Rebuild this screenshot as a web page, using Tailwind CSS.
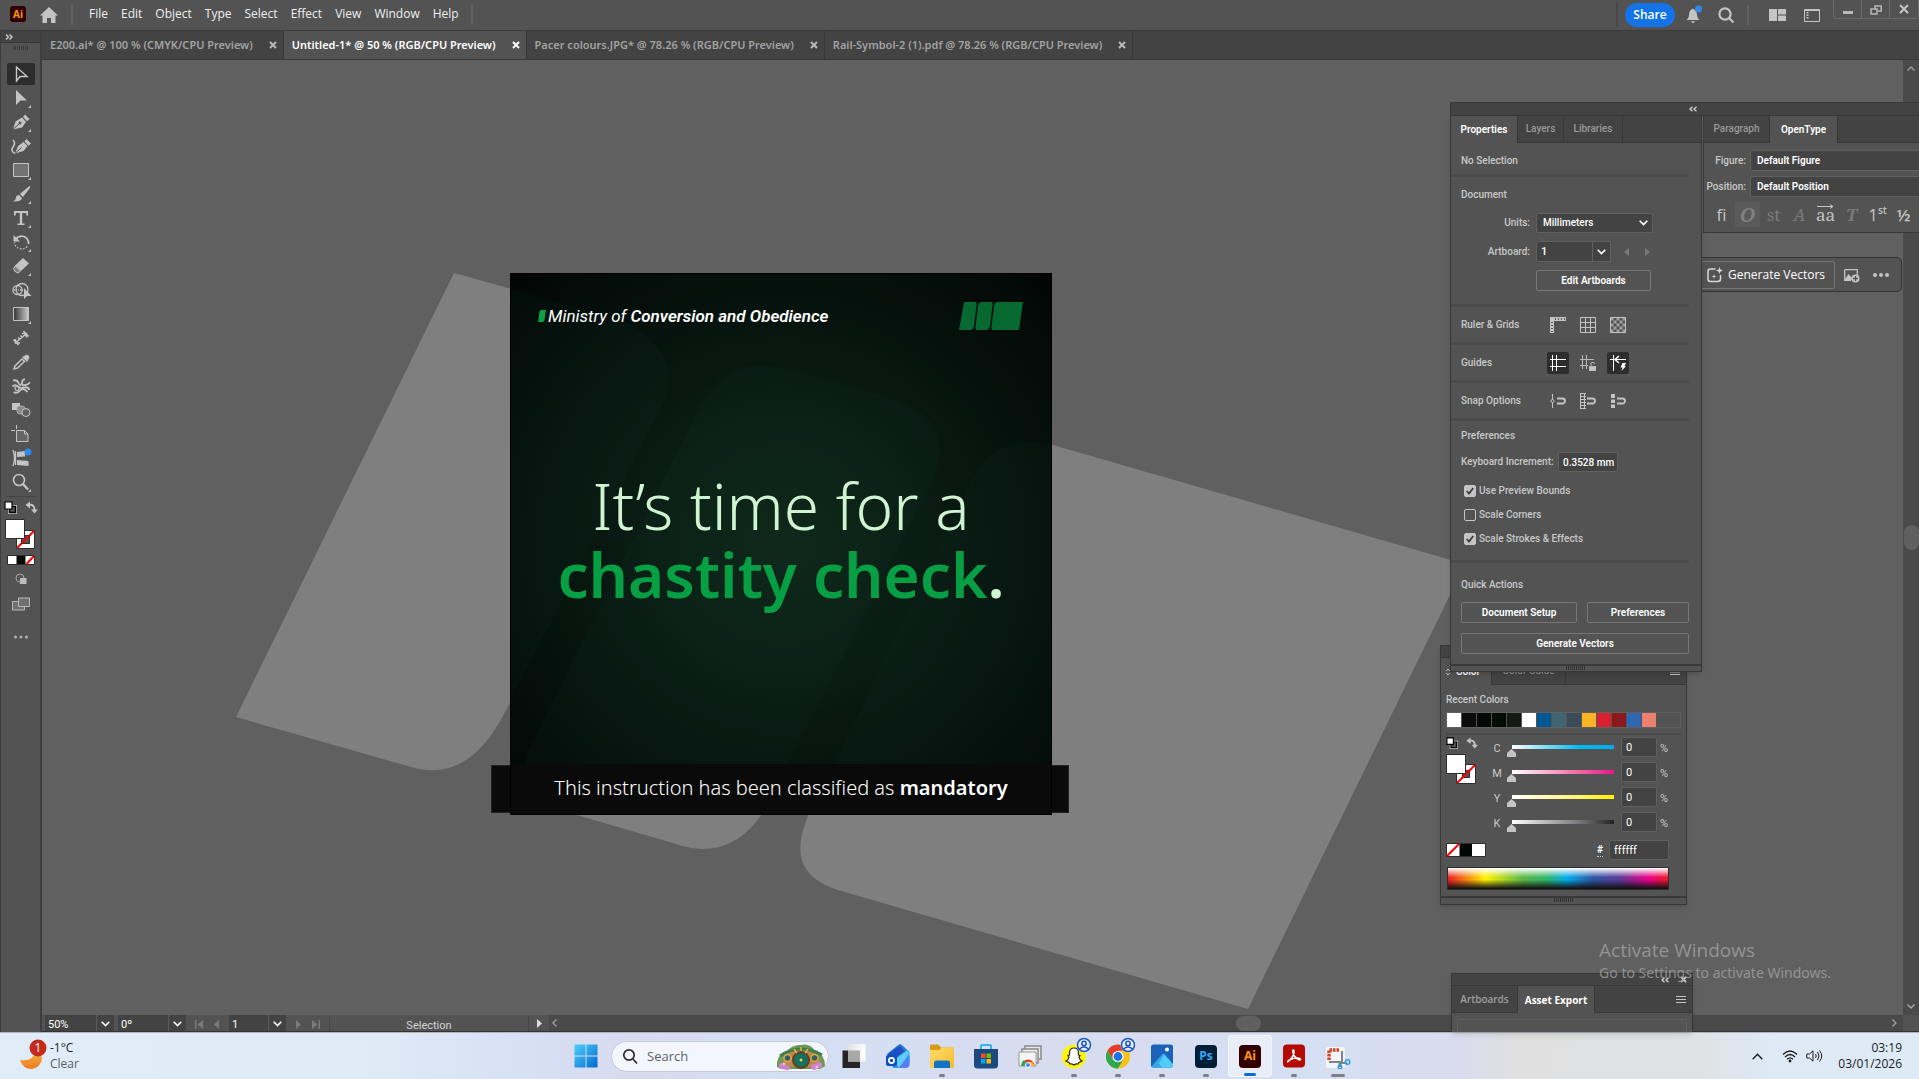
<!DOCTYPE html>
<html lang="en">
<head>
  <meta charset="UTF-8">
  <title>Untitled-1* @ 50 % (RGB/CPU Preview)</title>
  <script src="https://cdn.jsdelivr.net/npm/@tailwindcss/browser@4"></script>
</head>
<body class="h-screen flex flex-col overflow-hidden bg-[#535353] text-[#c8c8c8] font-['Open_Sans',sans-serif] text-[12px] leading-4">

  <!-- Menu bar -->
  <header class="h-[31px] shrink-0 flex items-center border-b border-[#3a3a3a] pl-[10px] relative">
    <div class="size-4 rounded-[3px] bg-[#330000] text-[#ff9a00] text-[10px] font-bold flex items-center justify-center mb-[2px]">Ai</div>
    <button class="ml-[13px]" aria-label="Home">
      <svg class="w-5 h-5" viewBox="0 0 20 20" fill="#c4c4c4"><path d="M10 2 19 10.500H16.500V18H12V13H8V18H3.500V10.500H1Z"/></svg>
    </button>
    <div class="w-[2px] h-5 bg-[#606060] ml-3"></div>
    <nav class="flex gap-[13px] ml-4 text-[#f0f0f0] mb-[3px]">
      <button>File</button><button>Edit</button><button>Object</button><button>Type</button><button>Select</button><button>Effect</button><button>View</button><button>Window</button><button>Help</button>
    </nav>
    <div class="w-[2px] h-5 bg-[#606060] ml-3"></div>
    <div class="ml-auto flex items-center h-full">
      <div class="w-[2px] h-6 bg-[#484848]"></div>
      <button class="ml-[7px] w-[50px] h-6 rounded-full bg-[#1473e6] text-white text-[12px] font-semibold">Share</button>
      <button class="ml-2 relative" aria-label="Notifications">
        <svg class="w-[20px] h-[20px]" viewBox="0 0 20 20"><path fill="#c4c4c4" d="M8.500 4.500A1.500 1.500 0 0 1 11 4.500Q14 6 14 10 14 13 16.500 15H3.500Q6 13 6 10 6 6 8.500 4.500ZM8 16.200H12Q11.500 18 10 18T8 16.200Z"/><circle cx="15.500" cy="4" r="3.500" fill="#2d8ceb"/></svg>
      </button>
      <button class="ml-[14px]" aria-label="Search">
        <svg class="w-[18px] h-[18px]" viewBox="0 0 18 18" fill="none" stroke="#c4c4c4" stroke-width="2.200"><circle cx="8" cy="8" r="5.600"/><path d="m12 12 4.500 4.500"/></svg>
      </button>
      <div class="w-[2px] h-5 bg-[#606060] ml-3"></div>
      <button class="ml-5" aria-label="Arrange documents">
        <svg class="w-[17px] h-[12px]" viewBox="0 0 17 12" fill="#c4c4c4"><path d="M0 0H8V12H0ZM9 0H17V5.500H9ZM9 6.500H17V12H9Z"/></svg>
      </button>
      <button class="ml-[18px]" aria-label="Workspace">
        <svg class="w-[16px] h-[13px]" viewBox="0 0 16 13" fill="none" stroke="#c4c4c4"><path d="M.5.500H15.500V12.500H.5ZM.5 1.500H15.500"/><path d="M3.500 3V10" stroke-width="2" stroke-dasharray="1.500 1"/></svg>
      </button>
      <div class="self-start ml-[13px] h-[19px] flex border border-t-0 border-[#6a6a6a] rounded-b-[4px] divide-x divide-[#6a6a6a]">
        <button class="w-7 flex justify-center" aria-label="Minimize"><svg class="w-3 h-4" viewBox="0 0 12 16"><path d="M1 11H11V14H1Z" fill="#b8b8b8"/></svg></button>
        <button class="w-7 flex justify-center" aria-label="Restore"><svg class="w-3 h-4" viewBox="0 0 12 16" fill="none" stroke="#b8b8b8" stroke-width="1.500"><path d="M5 9V6H11.200V11H8"/><path d="M1 9H7V14H1Z"/></svg></button>
        <button class="w-7 flex justify-center" aria-label="Close"><svg class="w-3 h-4" viewBox="0 0 12 16" stroke="#c4c4c4" stroke-width="2"><path d="m2 5 8 8M10 5l-8 8"/></svg></button>
      </div>
    </div>
  </header>

  <div class="flex-1 min-h-0 flex relative">

    <!-- Tool bar -->
    <aside class="w-[42px] shrink-0 border-x border-r-2 border-[#3e3e3e] flex flex-col items-center relative">
      <div class="w-full h-[12px] bg-[#434343] border-b border-[#383838] flex items-center pl-1">
        <svg class="w-2 h-2" viewBox="0 0 8 8" fill="none" stroke="#d0d0d0" stroke-width="1.300"><path d="M1 1.500 3.500 4 1 6.500M4.500 1.500 7 4 4.500 6.500"/></svg>
      </div>
      <div class="w-4 h-1 mt-[3px] mb-[13px] bg-[repeating-linear-gradient(90deg,#3a3a3a_0_1px,transparent_1px_2px)]"></div>
      <div class="flex flex-col gap-[2px] [&>button]:w-7 [&>button]:h-[22px] [&>button]:flex [&>button]:items-center [&>button]:justify-center [&_svg]:w-6 [&_svg]:h-[22px]">
        <button class="bg-[#2d2d2d] rounded-[2px]" aria-label="Selection"><svg viewBox="0 0 24 22" fill="none" stroke="#c8c8c8" stroke-width="1.400"><path d="M7.500 4V18L11 13.500H18Z"/></svg></button>
        <button aria-label="Direct selection"><svg viewBox="0 0 24 22" fill="#c4c4c4"><path d="M7 3V18L11.500 13.500H18ZM22 18V21H19Z"/></svg></button>
        <button aria-label="Pen"><svg viewBox="0 0 24 22" fill="#c4c4c4"><path d="M4 18.500 6.500 10.500 13 6.500 17 11 13 16.500ZM14 6 16 3.500 20.500 8 18 10.200ZM22 18V21H19Z"/><path d="m4 18.500 6.500-6" stroke="#535353" /><circle cx="11" cy="12" r="1.400" fill="#535353"/></svg></button>
        <button aria-label="Curvature"><svg viewBox="0 0 24 22" fill="#c4c4c4"><path d="M6 18.500 9 11 14.500 7 18.500 11 14.500 16ZM15.500 6.500 17.500 4 22 8.500 19.500 10.700Z"/><path d="m6 18.500 6.500-6" stroke="#535353"/><path d="M4 5Q7 8 4 12T6 18.500" fill="none" stroke="#c4c4c4" stroke-width="1.600"/></svg></button>
        <button aria-label="Rectangle"><svg viewBox="0 0 24 22"><path d="M4.500 4.500H19.500V17.500H4.500Z" fill="#737373" stroke="#c4c4c4"/><path d="M22 18V21H19Z" fill="#c4c4c4"/></svg></button>
        <button aria-label="Paintbrush"><svg viewBox="0 0 24 22" fill="#c4c4c4"><path d="M20.500 3Q22 3.500 20.500 5.500L14 14 10.800 11ZM10 12 13 15Q12 19 4 18.500 7 17 7 14.500T10 12ZM22 18V21H19Z"/></svg></button>
        <button aria-label="Type"><svg viewBox="0 0 24 22" fill="#c4c4c4"><path d="M5 4H19V8.500H17.500L17 6H13.200V16.500H15.500V18H8.500V16.500H10.800V6H7L6.500 8.500H5ZM22 18V21H19Z"/></svg></button>
        <button aria-label="Rotate"><svg viewBox="0 0 24 22" fill="none" stroke="#c4c4c4"><path d="M6.500 8.500Q10 4 15 5.500 20 8 19.500 13" stroke-width="1.800"/><path d="M4.500 4V10.500H11Z" fill="#c4c4c4" stroke="none"/><path d="M18 15.500Q15 19 10.500 17.500 6 16 5.500 11.500" stroke-width="1.400" stroke-dasharray="1.500 1.600"/><path d="M22 18V21H19Z" fill="#c4c4c4" stroke="none"/></svg></button>
        <button aria-label="Eraser"><svg viewBox="0 0 24 22" fill="#c4c4c4"><path d="m14 3 6 5.500-8 7.500-6-5.500Z"/><path d="m6 11 5.500 5-2.500 2Q5 17 4.500 13.500Z" fill="#808080" stroke="#c4c4c4"/><path d="M22 18V21H19Z"/></svg></button>
        <button aria-label="Shape builder"><svg viewBox="0 0 24 22" fill="none" stroke="#c4c4c4" stroke-width="1.300"><circle cx="8.500" cy="11" r="4.500"/><circle cx="13" cy="10.500" r="6"/><path d="M5 11H14" stroke-dasharray="1 1"/><path d="M15 9V20L18 17H22.500Z" fill="#c4c4c4" stroke="none"/></svg></button>
        <button aria-label="Gradient"><svg viewBox="0 0 24 22"><defs><linearGradient id="toolGrad"><stop stop-color="#333"/><stop offset="1" stop-color="#ccc"/></linearGradient></defs><path d="M4.500 4.500H19.500V17.500H4.500Z" fill="url(#toolGrad)" stroke="#c4c4c4"/><path d="M22 18V21H19Z" fill="#c4c4c4"/></svg></button>
        <button aria-label="Dimension"><svg viewBox="0 0 24 22" fill="none" stroke="#c4c4c4" stroke-width="1.500"><path d="M7.500 15 17 7M4.500 12.500 9.500 18M14.500 4 19.500 9.500M6.500 12V16H11M13 6.500H17.500V10.500M9 10.500 11 12.500M11.500 8.500 13.500 10.500"/></svg></button>
        <button aria-label="Eyedropper"><svg viewBox="0 0 24 22" fill="none" stroke="#c4c4c4" stroke-width="1.500"><path d="m5 18 1-3 7-7 2.500 2.500-7 6.500Z"/><path d="m13 6 5 5 2.500-4.500Q20 3.500 17.500 3.800Z" fill="#c4c4c4" stroke="none"/></svg></button>
        <button aria-label="Puppet warp"><svg viewBox="0 0 24 22" fill="none" stroke="#c4c4c4" stroke-width="1.800"><path d="M4 5.500Q8 4.500 9.500 8T13 8.500Q13 4 16 4.500M13 10Q18 11 21 7.500M3.500 11.500Q6 9 9 11.500T15 12.500Q19 11.500 20.500 15M4.500 17Q8 19 11 15.500T18.500 17"/><circle cx="8" cy="13.500" r="2" stroke-width="1.200"/></svg></button>
        <button aria-label="Blend"><svg viewBox="0 0 24 22"><path d="M3 4H11V11H3Z" fill="#c4c4c4"/><rect x="8" y="7" width="8" height="8" rx="3" fill="#8a8a8a" stroke="#ababab"/><circle cx="17" cy="13.500" r="4" fill="#606060" stroke="#c4c4c4"/></svg></button>
        <button aria-label="Artboard"><svg viewBox="0 0 24 22" fill="none" stroke="#c4c4c4"><path d="M2 7.500H6M7.500 2V6"/><path d="M7.500 7.500H15.500L19 11V18.500H7.500Z" fill="#666"/><path d="M15.500 7.500V11H19"/></svg></button>
        <button aria-label="Intertwine"><svg viewBox="0 0 24 22" fill="#c4c4c4"><path d="m8 5 8-1V9.500L8 10ZM8 13 19.500 14V19L8 18Z"/><path d="M4 3Q7 11 4 19M6.500 4V18" fill="none" stroke="#c4c4c4" stroke-width="1.300"/><circle cx="19" cy="5" r="3.500" fill="#2d8ceb"/></svg></button>
        <button aria-label="Zoom"><svg viewBox="0 0 24 22" fill="none" stroke="#c4c4c4" stroke-width="1.600"><circle cx="10" cy="9" r="5.500"/><path d="m14 13 5 5.500" stroke-width="2.400"/><path d="M22 18V21H19Z" fill="#c4c4c4" stroke="none"/></svg></button>
      </div>
      <div class="w-[30px] h-px bg-[#444] mt-[3px]"></div>
      <div class="flex gap-2 mt-1">
        <svg class="size-[13px]" viewBox="0 0 13 13" fill="none"><path d="M5 5H12V12H5Z" stroke="#d0d0d0" stroke-width="2"/><path d="M5.500 5.500H11.500V11.500H5.500Z" stroke="#000" stroke-width="1.500"/><path d="M1 1H8V8H1Z" fill="#fff" stroke="#000" stroke-width="1.200"/></svg>
        <svg class="size-[13px]" viewBox="0 0 13 13"><path d="M4 4Q9.500 3 9.500 9" fill="none" stroke="#c4c4c4" stroke-width="2"/><path d="M5 .5V7.500L.5 4ZM6 8.500H13L9.500 12.500Z" fill="#c4c4c4"/></svg>
      </div>
      <svg class="w-[31px] h-[32px] mt-[5px]" viewBox="0 0 31 32"><path d="M11.500 11.500H29.500V29.500H11.500Z" fill="#fff" stroke="#2d2d2d"/><path d="m12 29 17-17" stroke="#f00" stroke-width="2"/><path d="M16.500 16.500H24.500V24.500H16.500Z" fill="#535353" stroke="#2d2d2d"/><path d="M17 24 24 17" stroke="#f00" stroke-width="2"/><path d="M.5.500H19.500V19.500H.5Z" fill="#fff" stroke="#2d2d2d"/></svg>
      <svg class="w-[28px] h-[10px] mt-1" viewBox="0 0 28 10"><path d="M.5.500H27.500V9.500H.5Z" fill="#fff" stroke="#2d2d2d"/><path d="M9.500 1H18.500V9H9.500Z" fill="#030b07"/><path d="m19.500 9 7.500-8" stroke="#f00" stroke-width="2"/></svg>
      <svg class="size-[12px] mt-2" viewBox="0 0 12 12"><circle cx="5" cy="5" r="4" fill="none" stroke="#a8a8a8"/><path d="M5 5H11.500V11H5Z" fill="#bcbcbc"/></svg>
      <svg class="w-5 h-[14px] mt-[12px]" viewBox="0 0 20 14" fill="#707070" stroke="#b8b8b8"><path d="M1.500 4.500H13.500V13H1.500Z"/><path d="M7.500 1H18.500V9.500H7.500Z"/></svg>
      <svg class="w-4 h-1 mt-[24px]" viewBox="0 0 16 4" fill="#b0b0b0"><circle cx="2.500" cy="2" r="1.500"/><circle cx="8" cy="2" r="1.500"/><circle cx="13.500" cy="2" r="1.500"/></svg>
    </aside>

    <main class="flex-1 min-w-0 flex flex-col">
      <!-- Document tabs -->
      <div class="h-[29px] shrink-0 bg-[#434343] border-b border-[#383838] flex text-[11px] font-semibold text-[#a2a2a2] font-['Noto_Sans',sans-serif] [&>div]:flex [&>div]:items-center [&>div]:border-r [&>div]:border-[#383838] [&>div]:pl-2 [&>div]:pr-[6px] [&>div]:gap-4 [&>div]:whitespace-nowrap [&_svg]:size-2">
        <div><span>E200.ai* @ 100 % (CMYK/CPU Preview)</span><button aria-label="Close tab"><svg viewBox="0 0 8 8" stroke="#b8b8b8" stroke-width="2"><path d="m1 1 6 6M7 1 1 7"/></svg></button></div>
        <div class="bg-[#535353] text-white"><span>Untitled-1* @ 50 % (RGB/CPU Preview)</span><button aria-label="Close tab"><svg viewBox="0 0 8 8" stroke="#fff" stroke-width="2"><path d="m1 1 6 6M7 1 1 7"/></svg></button></div>
        <div><span>Pacer colours.JPG* @ 78.26 % (RGB/CPU Preview)</span><button aria-label="Close tab"><svg viewBox="0 0 8 8" stroke="#b8b8b8" stroke-width="2"><path d="m1 1 6 6M7 1 1 7"/></svg></button></div>
        <div><span>Rail-Symbol-2 (1).pdf @ 78.26 % (RGB/CPU Preview)</span><button aria-label="Close tab"><svg viewBox="0 0 8 8" stroke="#b8b8b8" stroke-width="2"><path d="m1 1 6 6M7 1 1 7"/></svg></button></div>
      </div>

      <div class="flex-1 min-h-0 flex">
        <!-- Canvas -->
        <div class="flex-1 min-w-0 relative overflow-hidden bg-[#606060]">
          <svg class="absolute inset-0 w-full h-full" fill="#7f7f7f">
            <g transform="translate(-42 -60)">
              <path id="band1" d="M454 273 605 315C655 328 684 365 660 410L510 702C487 752 456 780 411 767L236 717Z"/>
              <path id="band2" d="M701 405C719 370 750 359 785 368L893 399C938 412 951 445 931 482L775 790C757 832 726 858 683 846L570 813C528 801 515 775 531 743Z"/>
              <path id="band3" d="M966 492C981 456 1008 433 1053 445L1465 564 1248 1009 838 890C803 878 791 858 808 816Z"/>
            </g>
          </svg>

          <div class="absolute left-[449px] top-[705px] w-[578px] h-12 bg-[#0a0a0a] border border-[#222]"></div>
          <div class="absolute left-[468px] top-[213px] w-[542px] h-[542px] border border-black overflow-hidden flex flex-col font-['Noto_Sans',sans-serif] bg-[radial-gradient(circle_at_50%_50%,#0e261a_0%,#0a1d14_35%,#06120d_65%,#020604_100%)]">
            <svg class="absolute inset-0 w-full h-full" fill="#1f6b46" fill-opacity=".05">
              <g transform="translate(-511 -274)">
                <path d="M454 273 605 315C655 328 684 365 660 410L510 702C487 752 456 780 411 767L236 717Z"/>
                <path d="M701 405C719 370 750 359 785 368L893 399C938 412 951 445 931 482L775 790C757 832 726 858 683 846L570 813C528 801 515 775 531 743Z"/>
                <path d="M966 492C981 456 1008 433 1053 445L1465 564 1248 1009 838 890C803 878 791 858 808 816Z"/>
              </g>
            </svg>
            <div class="relative flex items-center justify-between pl-[27px] pr-7 pt-7 font-['Roboto',sans-serif]">
              <p class="flex items-center gap-[2px] text-[17px] leading-5 italic text-white">
                <svg class="w-2 h-3" viewBox="0 0 8 12" fill="#08a045"><path d="M3 0H8L6.500 10Q6.200 12 4.500 12H0L1.500 2Q1.800 0 3 0Z"/></svg>
                <span>Ministry of <b class="font-semibold">Conversion and Obedience</b></span>
              </p>
              <svg class="w-16 h-7" viewBox="0 0 64 28" fill="#06692f"><path d="M5 0H16Q18 0 17.600 3L15 24Q14 28 11 28H0ZM23 0H32Q34 0 33.600 3L31 24Q30 28 27 28H18Q16.200 28 16.500 25L19 4Q19.500 0 23 0ZM39 0H64L60 28H34Q32 28 32.400 25L35 4Q35.500 0 39 0Z"/></svg>
            </div>
            <h1 class="relative mt-[142px] text-center text-[64px] leading-[68px] font-light text-[#d0f3d2]">It’s time for a<br><span class="text-[62px] font-semibold text-[#069f44]">chastity check</span><span class="text-[62px] font-semibold">.</span></h1>
            <div class="relative mt-auto h-[50px] bg-[#0a0a0a] text-center text-[20px] leading-[48px] font-light text-white">This instruction has been classified as <b class="font-semibold">mandatory</b></div>
          </div>

          <div class="absolute right-px top-[197px] w-[212px] h-[35px] rounded-r-[5px] border border-[#333] bg-[#535353] flex items-center pl-[10px] text-white">
            <button class="w-[134px] h-7 border border-[#747474] rounded-[2px] flex items-center gap-[5px] pl-[5px] whitespace-nowrap">
              <svg class="size-4 shrink-0" viewBox="0 0 16 16" fill="none" stroke="#d8d8d8" stroke-width="1.500"><path d="M8.500 2H3.500Q1 2 1 4.500V12Q1 14.500 3.500 14.500H10.500Q13.500 14.500 13.500 12V8"/><path d="m12.500 0 .9 2.600L16 3.500l-2.600.9-.9 2.600-.9-2.600L9 3.500l2.600-.9ZM7 7l.6 1.900 1.900.6-1.900.6L7 12l-.6-1.900-1.900-.6 1.900-.6Z" fill="#d8d8d8" stroke="none"/></svg>
              Generate Vectors
            </button>
            <button class="ml-[9px]" aria-label="Add image"><svg class="size-4" viewBox="0 0 16 16"><path d="M.7 2.700H13.300V8M7 13.300H.7V2.700" fill="none" stroke="#c4c4c4" stroke-width="1.300"/><path d="m1 12 3.500-5 4 4.500L7 13H1Z" fill="#c4c4c4"/><circle cx="11.500" cy="11.500" r="4" fill="#c4c4c4"/><path d="M11.500 9V14M9 11.500H14" stroke="#535353" stroke-width="1.300"/></svg></button>
            <button class="ml-[13px]" aria-label="More"><svg class="w-4 h-1" viewBox="0 0 16 4" fill="#c4c4c4"><circle cx="2" cy="2" r="2"/><circle cx="8" cy="2" r="2"/><circle cx="14" cy="2" r="2"/></svg></button>
          </div>
        </div>
        <!-- Vertical scroll bar -->
        <div class="w-4 shrink-0 bg-[#4a4a4a] flex flex-col items-center py-[5px]">
          <svg class="w-2 h-[7px]" viewBox="0 0 8 7" fill="none" stroke="#989898" stroke-width="1.500"><path d="M.5 5.500 4 2 7.500 5.500"/></svg>
          <div class="w-[15px] h-[25px] rounded-full bg-[#606060] mt-auto mb-auto"></div>
          <svg class="w-2 h-[7px]" viewBox="0 0 8 7" fill="none" stroke="#a8a8a8" stroke-width="1.500"><path d="M.5 1.500 4 5 7.500 1.500"/></svg>
        </div>
      </div>

      <!-- Status bar -->
      <div class="h-[17px] shrink-0 bg-[#4a4a4a] border-b border-[#333] flex items-stretch text-[11px] text-white font-['Roboto',sans-serif] relative">
        <div class="w-[486px] bg-[#535353] pl-[3px] flex [&_input]:bg-[#434343] [&_input]:pl-[3px] [&_input]:pt-[3px] [&_input]:min-w-0 [&_input]:h-4 [&_button]:flex [&_button]:items-center [&_button]:justify-center [&_button]:pt-[2px]">
          <input class="w-[51px]" aria-label="Zoom level" value="50%">
          <button class="w-[18px] bg-[#434343] border-l border-[#5a5a5a]" aria-label="Zoom levels"><svg class="w-[9px] h-[6px]" viewBox="0 0 9 6" fill="none" stroke="#fff" stroke-width="1.600"><path d="m.7.8 3.800 3.800L8.300.8"/></svg></button>
          <input class="w-[50px] ml-1" aria-label="Rotation" value="0º">
          <button class="w-[18px] bg-[#434343] border-l border-[#5a5a5a]" aria-label="Rotations"><svg class="w-[9px] h-[6px]" viewBox="0 0 9 6" fill="none" stroke="#fff" stroke-width="1.600"><path d="m.7.8 3.800 3.800L8.300.8"/></svg></button>
          <button class="w-[26px]" aria-label="First artboard"><svg class="w-2 h-[9px]" viewBox="0 0 8 9" fill="#7a7a7a"><path d="M0 0H1.500V9H0ZM8 0V9L2.500 4.500Z"/></svg></button>
          <button class="w-[17px]" aria-label="Previous artboard"><svg class="w-[5px] h-[9px] mr-2" viewBox="0 0 5 9" fill="#7a7a7a"><path d="M5 0V9L0 4.500Z"/></svg></button>
          <input class="w-[39px]" aria-label="Artboard number" value="1">
          <button class="w-[18px] bg-[#434343] border-l border-[#5a5a5a]" aria-label="Artboards"><svg class="w-[9px] h-[6px]" viewBox="0 0 9 6" fill="none" stroke="#fff" stroke-width="1.600"><path d="m.7.8 3.800 3.800L8.300.8"/></svg></button>
          <button class="w-[25px]" aria-label="Next artboard"><svg class="w-[5px] h-[9px]" viewBox="0 0 5 9" fill="#7a7a7a"><path d="M0 0V9L5 4.500Z"/></svg></button>
          <button class="w-[18px]" aria-label="Last artboard"><svg class="w-2 h-[9px] mr-2" viewBox="0 0 8 9" fill="#7a7a7a"><path d="M6.500 0H8V9H6.500ZM0 0V9L5.500 4.500Z"/></svg></button>
          <span class="flex-1 border-l border-[#474747] text-center leading-[21px] text-[#d4d4d4]">Selection</span>
        </div>
        <button class="w-[21px] bg-[#535353] border-l border-[#474747] flex items-center justify-center" aria-label="Status menu"><svg class="w-[5px] h-[9px]" viewBox="0 0 5 9" fill="#ddd"><path d="M0 0V9L5 4.500Z"/></svg></button>
        <div class="flex-1 flex items-center justify-between pl-[3px] pr-[22px]">
          <svg class="w-[5px] h-2" viewBox="0 0 5 8" fill="none" stroke="#a0a0a0" stroke-width="1.300"><path d="M4.500.5 1 4 4.500 7.500"/></svg>
          <div class="w-[25px] h-[15px] rounded-full bg-[#606060] ml-[47px]"></div>
          <svg class="w-[5px] h-2" viewBox="0 0 5 8" fill="none" stroke="#a0a0a0" stroke-width="1.300"><path d="M.5.500 4 4 .5 7.500"/></svg>
        </div>
        <div class="absolute right-0 top-0 w-4 h-4 bg-[#535353]"></div>
      </div>
    </main>

    <!-- Color panel -->
    <section class="absolute right-[232px] top-[614px] w-[247px] bg-[#535353] border border-[#383838] shadow-md font-['Roboto',sans-serif] text-[10px]">
      <div class="h-3 bg-[#434343] border-b border-[#383838]"></div>
      <div class="h-[27px] flex bg-[#434343] text-[#989898]">
        <button class="w-[50px] bg-[#535353] text-white font-semibold flex items-center gap-[6px] pl-[5px]"><svg class="w-1 h-2 shrink-0" viewBox="0 0 4 8" fill="none" stroke="#bbb"><path d="M0 3 2 1 4 3M0 5 2 7 4 5"/></svg>Color</button>
        <button class="w-[75px] border border-t-0 border-[#383838]">Color Guide</button>
        <div class="flex-1 border-b border-[#383838] flex justify-end pr-[6px] pt-[11px]"><svg class="w-[10px] h-[6px]" viewBox="0 0 10 6" stroke="#c4c4c4"><path d="M0 .5H10M0 3H10M0 5.500H10"/></svg></div>
      </div>
      <div class="pt-[7px] pl-[5px] pr-[5px]">
        <h2 class="font-medium">Recent Colors</h2>
        <div class="mt-1 h-4 flex gap-px border border-[#606060] [&>i]:w-[14px]">
          <i class="bg-white"></i><i class="bg-[#0a0a0a]"></i><i class="bg-[#040908]"></i><i class="bg-[#030c07]"></i><i class="bg-[#141a15]"></i><i class="bg-white"></i><i class="bg-[#005792]"></i><i class="bg-[#426371]"></i><i class="bg-[#394c58]"></i><i class="bg-[#fcb424]"></i><i class="bg-[#da202e]"></i><i class="bg-[#8b181c]"></i><i class="bg-[#2f67b2]"></i><i class="bg-[#eb806e]"></i>
        </div>
        <div class="h-[2px] bg-[#4a4a4a] mt-[5px]"></div>
        <div class="flex pt-[2px]">
          <div class="w-[45px]">
            <div class="flex gap-2">
              <svg class="size-3" viewBox="0 0 13 13" fill="none"><path d="M5 5H12V12H5Z" stroke="#d0d0d0" stroke-width="2"/><path d="M5.500 5.500H11.500V11.500H5.500Z" stroke="#000" stroke-width="1.500"/><path d="M1 1H8V8H1Z" fill="#fff" stroke="#000" stroke-width="1.200"/></svg>
              <svg class="size-3" viewBox="0 0 13 13"><path d="M4 4Q9.500 3 9.500 9" fill="none" stroke="#c4c4c4" stroke-width="2"/><path d="M5 .5V7.500L.5 4ZM6 8.500H13L9.500 12.500Z" fill="#c4c4c4"/></svg>
            </div>
            <svg class="size-[30px] mt-[5px]" viewBox="0 0 30 30"><path d="M10.500 10.500H29.500V29.500H10.500Z" fill="#fff" stroke="#2d2d2d"/><path d="m11 29 18-18" stroke="#f00" stroke-width="2"/><path d="M16.500 16.500H23.500V23.500H16.500Z" fill="#535353" stroke="#2d2d2d"/><path d="M16 24 24 16" stroke="#f00" stroke-width="2"/><path d="M.5.500H19.500V19.500H.5Z" fill="#fff" stroke="#2d2d2d"/></svg>
          </div>
          <div class="flex-1 text-[11px] [&>label]:flex [&>label]:h-[25px] [&>label>span]:w-3 [&>label>span]:text-center [&>label>span]:pt-1 [&>label>em]:not-italic [&>label>em]:pt-1 [&>label>em]:ml-[3px] [&_input[type=text]]:w-9 [&_input[type=text]]:h-5 [&_input[type=text]]:ml-[2px] [&_input[type=text]]:pl-1 [&_input[type=text]]:bg-[#434343] [&_input[type=text]]:border [&_input[type=text]]:border-[#606060] [&_input[type=text]]:rounded-[2px] [&_input[type=text]]:text-white [&_input[type=range]]:appearance-none [&_input[type=range]]:w-[112px] [&_input[type=range]]:h-3 [&_input[type=range]]:mt-2 [&_input[type=range]]:ml-1 [&_input[type=range]]:bg-no-repeat [&_input[type=range]]:bg-[length:102px_4px] [&_input[type=range]]:bg-[position:5px_0px] [&_input::-webkit-slider-thumb]:appearance-none [&_input::-webkit-slider-thumb]:w-[9px] [&_input::-webkit-slider-thumb]:h-2 [&_input::-webkit-slider-thumb]:mt-1 [&_input::-webkit-slider-thumb]:bg-[#c4c4c4] [&_input::-webkit-slider-thumb]:[clip-path:polygon(50%_0,100%_50%,100%_100%,0_100%,0_50%)]">
            <label><span>C</span><input type="range" value="0" aria-label="Cyan" class="bg-[linear-gradient(90deg,#fff,#00b9f2_66%,#00adef)]"><input type="text" value="0" aria-label="Cyan value"><em>%</em></label>
            <label><span>M</span><input type="range" value="0" aria-label="Magenta" class="bg-[linear-gradient(90deg,#fff,#f068a5_66%,#ec1590)]"><input type="text" value="0" aria-label="Magenta value"><em>%</em></label>
            <label><span>Y</span><input type="range" value="0" aria-label="Yellow" class="bg-[linear-gradient(90deg,#fff,#fff46a_66%,#fff100)]"><input type="text" value="0" aria-label="Yellow value"><em>%</em></label>
            <label><span>K</span><input type="range" value="0" aria-label="Black" class="bg-[linear-gradient(90deg,#fff,#6e6f72_70%,#231f20)]"><input type="text" value="0" aria-label="Black value"><em>%</em></label>
          </div>
        </div>
        <div class="flex items-center pt-[3px] pr-3">
          <svg class="w-10 h-[14px]" viewBox="0 0 40 14"><path d="M.5.500H39.500V13.500H.5Z" fill="#fff" stroke="#2d2d2d"/><path d="M13.500 1H26V13H13.500Z" fill="#020706"/><path d="m1 13 12-12" stroke="#f00" stroke-width="2"/></svg>
          <label for="hex" class="ml-auto mr-[6px] text-white font-bold border-b border-dotted border-[#ccc] leading-3">#</label>
          <input id="hex" class="w-[60px] h-5 pl-1 bg-[#434343] border border-[#606060] rounded-[2px] text-white text-[11px]" value="ffffff">
        </div>
        <div class="mt-[7px] mb-[6px] ml-px w-[222px] h-[23px] border border-[#2d2d2d] bg-[linear-gradient(180deg,#fff,#fff0_45%,#0000_55%,#111_98%),linear-gradient(90deg,#ed1c24,#fff200_17%,#5bb947_34%,#2fb56a_45%,#00aeef_54%,#2e54a4_66%,#5a3b98_78%,#ec008c_91%,#ed1c24)]"></div>
      </div>
      <div class="h-[8px] border-t-2 border-[#3a3a3a] flex justify-center"><div class="w-5 h-1 bg-[repeating-linear-gradient(90deg,#333_0_1px,transparent_1px_2px)]"></div></div>
    </section>

    <!-- Properties and OpenType panels -->
    <section class="absolute right-0 top-[71px] w-[469px] flex flex-wrap items-start font-['Roboto',sans-serif] text-[10px] font-medium">
      <div class="w-full h-[14px] bg-[#434343] border border-r-0 border-[#383838] flex items-center pl-[238px]">
        <svg class="w-2 h-[6px]" viewBox="0 0 8 6" fill="none" stroke="#d0d0d0" stroke-width="1.300"><path d="M3.500.8 1 3 3.500 5.200M7.500.8 5 3 7.500 5.200"/></svg>
      </div>

      <div class="w-[252px] bg-[#535353] border-x border-b border-[#383838] shadow-md">
        <div class="h-[27px] flex bg-[#434343] text-[#989898]">
          <button class="w-[66px] bg-[#535353] text-white font-semibold">Properties</button>
          <button class="w-[47px] border-b border-x border-[#383838]">Layers</button>
          <button class="w-[59px] border-b border-r border-[#383838]">Libraries</button>
          <div class="flex-1 border-b border-[#383838]"></div>
        </div>
        <div class="mr-3 divide-y-3 divide-[#4b4b4b] [&>div]:pl-[10px]">
          <div class="h-[34px] pt-[10px]">No Selection</div>
          <div class="pt-[10px] pb-[13px] pr-[36px]">
            <h2>Document</h2>
            <div class="flex items-center mt-[10px]">
              <label for="units" class="w-[69px] text-right">Units:</label>
              <div class="relative ml-[6px] flex-1">
                <select id="units" class="appearance-none w-full h-5 pl-[6px] bg-[#434343] border border-[#606060] rounded-[2px] text-white"><option>Millimeters</option></select>
                <svg class="absolute right-[5px] top-[7px] w-[9px] h-[6px]" viewBox="0 0 9 6" fill="none" stroke="#fff" stroke-width="1.600"><path d="m.7.8 3.800 3.800L8.300.8"/></svg>
              </div>
            </div>
            <div class="flex items-center mt-2 h-[21px]">
              <label for="board" class="w-[69px] text-right">Artboard:</label>
              <input id="board" class="ml-[6px] w-[57px] h-[21px] pl-1 bg-[#434343] border border-[#606060] rounded-l-[2px] text-white text-[11px]" value="1">
              <button class="w-[18px] h-[21px] border border-l-0 border-[#606060] bg-[#434343] flex items-center justify-center" aria-label="Choose artboard"><svg class="w-[9px] h-[6px]" viewBox="0 0 9 6" fill="none" stroke="#fff" stroke-width="1.600"><path d="m.7.8 3.800 3.800L8.300.8"/></svg></button>
              <svg class="w-[5px] h-2 ml-[13px]" viewBox="0 0 5 8" fill="#7a7a7a"><path d="M5 0V8L0 4Z"/></svg>
              <svg class="w-[5px] h-2 ml-4" viewBox="0 0 5 8" fill="#7a7a7a"><path d="M0 0V8L5 4Z"/></svg>
            </div>
            <button class="block mt-2 ml-[75px] w-[115px] h-[21px] border border-[#777] rounded-[2px] text-white font-semibold">Edit Artboards</button>
          </div>
          <div class="h-[38px] flex items-center gap-2"><h2 class="w-[78px]">Ruler &amp; Grids</h2>
            <button class="size-[22px] flex items-center justify-center" aria-label="Rulers"><svg class="size-4" viewBox="0 0 16 16"><path d="M0 0H16V4H4V16H0Z" fill="#c4c4c4"/><path d="M5.500 1V3M8.500 1V3M11.500 1V3M14.500 1V3M1 5.500H3M1 8.500H3M1 11.500H3M1 14.500H3" stroke="#535353"/></svg></button>
            <button class="size-[22px] flex items-center justify-center" aria-label="Grid"><svg class="size-4" viewBox="0 0 16 16" fill="none" stroke="#c4c4c4"><path d="M.5.500H15.500V15.500H.5ZM5.500.500V15.500M10.500.500V15.500M.5 5.500H15.500M.5 10.500H15.500"/></svg></button>
            <button class="size-[22px] flex items-center justify-center" aria-label="Transparency grid"><svg class="size-4" viewBox="0 0 16 16"><defs><pattern id="chk" x=".5" y=".5" width="6" height="6" patternUnits="userSpaceOnUse"><path d="M0 0H3V3H0ZM3 3H6V6H3Z" fill="#a0a0a0"/></pattern></defs><path d="M.5.500H15.500V15.500H.5Z" fill="url(#chk)" stroke="#c4c4c4"/></svg></button>
          </div>
          <div class="h-[38px] flex items-center gap-2"><h2 class="w-[78px]">Guides</h2>
            <button class="size-[22px] rounded-[2px] bg-[#2d2d2d] flex items-center justify-center" aria-label="Show guides"><svg class="size-4" viewBox="0 0 16 16" stroke="#fff"><path d="M2.500 0V16M6.500 0V16M0 4.500H16M0 11.500H16"/></svg></button>
            <button class="size-[22px] flex items-center justify-center" aria-label="Lock guides"><svg class="size-4" viewBox="0 0 16 16" stroke="#b8b8b8" fill="none"><path d="M2.500 0V14M6.500 0V14M0 4.500H14M0 10.500H8"/><path d="M9.500 11.500H16V16H9.500Z" fill="#c4c4c4"/><path d="M11 11V8Q13 6.500 15 8.500"/></svg></button>
            <button class="size-[22px] rounded-[2px] bg-[#2d2d2d] flex items-center justify-center" aria-label="Smart guides"><svg class="size-4" viewBox="0 0 16 16" stroke="#fff" fill="none"><path d="M3.500 0V16M0 4.500H16"/><path d="M9 1 5 4.500 9 8" stroke-width="1.500"/><path d="M12.500 8H16L14.500 11H16L11.500 16 12.500 12.500H10.500Z" fill="#fff" stroke="none"/></svg></button>
          </div>
          <div class="h-[38px] flex items-center gap-2"><h2 class="w-[78px]">Snap Options</h2>
            <button class="size-[22px] flex items-center justify-center" aria-label="Snap to point"><svg class="size-4" viewBox="0 0 16 16" stroke="#c4c4c4" fill="none"><path d="M2.500 1V15"/><circle cx="2.500" cy="8" r="1.500" fill="#535353"/><path d="M7 5.500H12.500A2.500 2.500 0 0 1 12.500 10.500H7" stroke-width="1.800"/></svg></button>
            <button class="size-[22px] flex items-center justify-center" aria-label="Snap to grid"><svg class="size-4" viewBox="0 0 16 16" stroke="#c4c4c4" fill="none"><path d="M.5.500V15.500M4.500.500V15.500M0 .5H6M0 3.500H6M0 6.500H6M0 9.500H6M0 12.500H6M0 15.500H6"/><path d="M7 5.500H12.500A2.500 2.500 0 0 1 12.500 10.500H7" stroke-width="1.800"/></svg></button>
            <button class="size-[22px] flex items-center justify-center" aria-label="Snap to pixel"><svg class="size-4" viewBox="0 0 16 16" stroke="#c4c4c4" fill="none"><path d="M1 1H5V5H1ZM1 6.500H5V10H1ZM1 11.500H5V15H1Z" fill="#c4c4c4" stroke="none"/><path d="M7 5.500H12.500A2.500 2.500 0 0 1 12.500 10.500H7" stroke-width="1.800"/></svg></button>
          </div>
          <div class="pt-[7px] pb-[9px]">
            <h2>Preferences</h2>
            <div class="flex items-center mt-2"><label for="inc" class="w-[93px]">Keyboard Increment:</label><input id="inc" class="ml-1 w-[60px] h-5 pl-1 bg-[#434343] border border-[#606060] rounded-[2px] text-white text-[10px]" value="0.3528 mm"></div>
            <div class="mt-[7px] pl-[3px] [&>label]:flex [&>label]:items-center [&>label]:gap-[3px] [&>label]:h-6 [&>label]:relative [&_input]:appearance-none [&_input]:size-3 [&_input]:rounded-[2px] [&_input]:border [&_input]:border-[#c4c4c4] [&_input]:checked:bg-[#c4c4c4] [&_svg]:absolute [&_svg]:left-[2px] [&_svg]:size-2">
              <label><input type="checkbox" checked><svg viewBox="0 0 8 8" fill="none" stroke="#3a3a3a" stroke-width="1.800"><path d="m.8 4 2.200 2.500L7.200 1"/></svg>Use Preview Bounds</label>
              <label><input type="checkbox">Scale Corners</label>
              <label><input type="checkbox" checked><svg viewBox="0 0 8 8" fill="none" stroke="#3a3a3a" stroke-width="1.800"><path d="m.8 4 2.200 2.500L7.200 1"/></svg>Scale Strokes &amp; Effects</label>
            </div>
          </div>
          <div class="pt-[14px] pb-[10px]">
            <h2>Quick Actions</h2>
            <div class="mt-[9px] flex flex-wrap gap-y-[10px] gap-x-[10px] [&>button]:h-[21px] [&>button]:border [&>button]:border-[#777] [&>button]:rounded-[2px] [&>button]:text-white [&>button]:font-semibold">
              <button class="w-[116px]">Document Setup</button><button class="flex-1">Preferences</button><button class="w-full">Generate Vectors</button>
            </div>
          </div>
        </div>
        <div class="h-[7px] border-t-2 border-[#3a3a3a] flex justify-center"><div class="w-5 h-1 bg-[repeating-linear-gradient(90deg,#333_0_1px,transparent_1px_2px)]"></div></div>
      </div>

      <div class="flex-1 ml-px bg-[#535353] border-l border-b border-[#383838] overflow-hidden">
        <div class="h-[27px] flex bg-[#434343] text-[#989898]">
          <button class="w-[66px] border-b border-r border-[#383838]">Paragraph</button>
          <button class="w-[67px] bg-[#535353] text-white font-semibold">OpenType</button>
          <div class="flex-1 border-b border-l border-[#383838]"></div>
        </div>
        <div class="flex items-center mt-[7px]"><label for="fig" class="w-[42px] text-right">Figure:</label><select id="fig" class="appearance-none flex-1 ml-1 h-[21px] pl-[6px] bg-[#434343] border border-r-0 border-[#606060] rounded-l-[2px] text-white font-semibold"><option>Default Figure</option></select></div>
        <div class="flex items-center mt-[5px]"><label for="pos" class="w-[42px] text-right">Position:</label><select id="pos" class="appearance-none flex-1 ml-1 h-[21px] pl-[6px] bg-[#434343] border border-r-0 border-[#606060] rounded-l-[2px] text-white font-semibold"><option>Default Position</option></select></div>
        <div class="flex gap-px mt-[5px] mb-[5px] pl-[5px] font-['Noto_Serif','Liberation_Serif',serif] text-[17px] leading-6 font-normal text-[#c4c4c4] [&>button]:w-[25px] [&>button]:h-[25px] [&>button]:shrink-0 [&>button]:text-center">
          <button class="font-['Open_Sans',sans-serif]">fi</button>
          <button class="bg-[#5a5a5a] text-[#808080] italic font-bold text-[20px]">O</button>
          <button class="text-[#7a7a7a]">st</button>
          <button class="text-[#7a7a7a] italic">A</button>
          <button class="relative">aa<svg class="absolute left-[4px] top-[2px] w-[17px] h-[5px]" viewBox="0 0 17 5" fill="none" stroke="#c4c4c4"><path d="M0 2.500H16M13 .5 16 2.500 13 4.500"/></svg></button>
          <button class="text-[#7a7a7a] italic font-bold">T</button>
          <button class="font-['Open_Sans',sans-serif] whitespace-nowrap">1<span class="align-super text-[10px] leading-none font-semibold">st</span></button>
          <button class="font-['Open_Sans',sans-serif] font-semibold">½</button>
        </div>
      </div>
    </section>

    <!-- Asset Export panel -->
    <section class="absolute right-[226px] bottom-0 w-[242px] h-[59px] bg-[#535353] border border-b-0 border-[#383838] shadow-md text-[10px] font-['Open_Sans',sans-serif] flex flex-col">
      <div class="h-3 shrink-0 bg-[#434343] border-b border-[#383838] flex items-center justify-end gap-[11px] pr-[5px]">
        <svg class="w-2 h-[6px]" viewBox="0 0 8 6" fill="none" stroke="#d0d0d0" stroke-width="1.300"><path d="M3.500.8 1 3 3.500 5.200M7.500.8 5 3 7.500 5.200"/></svg>
        <svg class="size-[7px]" viewBox="0 0 8 8" stroke="#d0d0d0" stroke-width="2"><path d="m1 1 6 6M7 1 1 7"/></svg>
      </div>
      <div class="h-[27px] shrink-0 flex bg-[#434343] text-[#a0a0a0] font-semibold">
        <button class="w-[66px] border-b border-r border-[#383838]">Artboards</button>
        <button class="w-[76px] bg-[#535353] text-white font-bold">Asset Export</button>
        <div class="flex-1 border-b border-l border-[#383838] flex items-center justify-end pr-[6px]"><svg class="w-[10px] h-[7px]" viewBox="0 0 10 7" stroke="#c4c4c4"><path d="M0 .5H10M0 3.500H10M0 6.500H10"/></svg></div>
      </div>
      <div class="flex-1 mx-[5px] mt-[6px] border border-b-0 border-[#606060] rounded-t-[2px]"></div>
    </section>

    <!-- Activation watermark -->
    <div class="absolute right-[88px] bottom-[49px] text-[#a0a0a0]/80 pointer-events-none whitespace-nowrap">
      <p class="text-[19px] leading-[26px]">Activate Windows</p>
      <p class="text-[14px] leading-5 font-['Noto_Sans',sans-serif]">Go to Settings to activate Windows.</p>
    </div>
  </div>

  <!-- Windows task bar -->
  <footer class="h-[47px] shrink-0 flex items-center border-t border-[#b0b4bc] text-[#1b1b1b] bg-[linear-gradient(90deg,#e0edf8_0%,#deeaf6_20%,#d6dff4_28%,#d8dbee_33%,#d4dff4_40%,#d8dcef_55%,#d5dff3_68%,#d9dcee_76%,#e0e0e1_79%,#dfe1e2_88%,#dde9f5_92%,#deebf7_100%)]">
    <div class="flex-1 flex items-center pl-[19px]">
      <div class="relative">
        <svg class="w-[30px] h-[34px]" viewBox="0 0 30 34"><defs><linearGradient id="moon" x2="0" y2="1"><stop stop-color="#f5b83a"/><stop offset="1" stop-color="#ec7a24"/></linearGradient></defs><path d="M1 21Q14 23 18 11 24 15 22.500 22 20 29 12.500 30 4 30 1 21Z" fill="url(#moon)"/><circle cx="19" cy="9" r="8.500" fill="#c42b1c"/></svg>
        <span class="absolute left-0 top-0 w-[38px] text-center text-[12px] leading-[18px] text-white">1</span>
      </div>
      <div class="ml-px leading-4"><p>-1°C</p><p class="text-[#5a5d62]">Clear</p></div>
    </div>

    <div class="flex items-center pl-[3px] [&>button]:w-11 [&>button]:h-[42px] [&>button]:flex [&>button]:flex-col [&>button]:items-center [&>button]:justify-center [&>button]:relative [&>button>svg]:size-[26px] [&>button>i]:absolute [&>button>i]:bottom-0 [&>button>i]:w-[6px] [&>button>i]:h-[3px] [&>button>i]:rounded-full [&>button>i]:bg-[#7c7f88]">
      <button aria-label="Start"><svg viewBox="0 0 26 26"><defs><linearGradient id="win" x2="1" y2="1"><stop stop-color="#4fd0fb"/><stop offset="1" stop-color="#0069d0"/></linearGradient></defs><path d="M1.500 1.500H12.500V12.500H1.500ZM13.500 1.500H24.500V12.500H13.500ZM1.500 13.500H12.500V24.500H1.500ZM13.500 13.500H24.500V24.500H13.500Z" fill="url(#win)"/></svg></button>
      <label class="mx-[3px] w-[218px] h-[31px] rounded-full bg-[#f3f6fc] border border-[#c5cbd9] flex items-center pl-[10px] pr-[2px]">
        <svg class="size-4 shrink-0" viewBox="0 0 16 16" fill="none" stroke="#2a2a2a" stroke-width="1.700"><circle cx="7" cy="7" r="5.200"/><path d="m11 11 4 4.500"/></svg>
        <input type="search" placeholder="Search" class="ml-[9px] flex-1 min-w-0 text-[13px] placeholder:text-[#5c5f66]">
        <svg class="w-[50px] h-[27px]" viewBox="0 0 50 27"><path d="M1 24Q0 12 11 8 17 1 25 2 34 0 39 8 49 11 49 23L44 26H5Z" fill="#6b9a56"/><path d="M6 24Q6 8 25 7T44 24Z" fill="#b98a4a"/><path d="M4 13Q14 6 25 6T46 12" stroke="#3f7d4d" stroke-width="3" fill="none"/><circle cx="25" cy="17" r="9" fill="#6e3b1e"/><circle cx="25" cy="17" r="7" fill="#14705f"/><circle cx="25" cy="17" r="1.500" fill="#f2cf4a"/><g fill="#345d66" stroke="#e2a74b" stroke-width="1.500"><circle cx="11.500" cy="15" r="3.500"/><circle cx="38.500" cy="15" r="3.500"/></g><path d="M18 6 21 10M32 6 29 10M25 4V8" stroke="#e8b445" stroke-width="1.500"/><g fill="#d77fd6"><circle cx="6" cy="23" r="3"/><circle cx="11" cy="25" r="2.500"/><circle cx="38" cy="24" r="3"/><circle cx="43" cy="22" r="3"/></g><g fill="#f0b8ee"><circle cx="8" cy="21" r="1.500"/><circle cx="41" cy="24" r="1.500"/></g></svg>
      </label>
      <button aria-label="Task view"><svg viewBox="0 0 26 26"><defs><linearGradient id="tv" x2="1"><stop stop-color="#e2e2e2"/><stop offset="1" stop-color="#fff"/></linearGradient></defs><path d="M1.500 7.500H19V25H1.500Z" fill="#242424"/><path d="M7 1H24.500V18.500H7Z" fill="url(#tv)"/><path d="M7 7.500H19V18.500H7Z" fill="#a8a8a8"/></svg></button>
      <button aria-label="Outlook"><svg viewBox="0 0 26 26"><defs><linearGradient id="ol" x2="1" y2="1"><stop stop-color="#1257c8"/><stop offset="1" stop-color="#35b8f5"/></linearGradient></defs><path d="M2 11 14 1.500Q16 .5 18 3L24.500 9V21Q24.500 25 20 25H8Z" fill="url(#ol)"/><path d="M3 11 15 3 20 8 8 17Z" fill="#1d4fc0"/><path d="M9 17 22 7.500 24.500 10 14 25Z" fill="#5fcdfb"/><path d="M14 25 24.500 13V21Q24.500 25 20 25Z" fill="#5a7cf0"/><rect x="1" y="12" width="11" height="11" rx="2" fill="#0f4fbf"/><circle cx="6.500" cy="17.500" r="2.600" fill="none" stroke="#fff" stroke-width="1.700"/></svg></button>
      <button aria-label="File Explorer"><svg viewBox="0 0 26 26"><defs><linearGradient id="fe" x2="1" y2="1"><stop stop-color="#ffdf70"/><stop offset="1" stop-color="#f8b828"/></linearGradient></defs><path d="M1 3Q1 1.500 2.500 1.500H9L12 4.500H23.500Q25 4.500 25 6V12H1Z" fill="#d99a10"/><path d="M1 7H10L13 4.500H25V23.500Q25 25 23.500 25H2.500Q1 25 1 23.500Z" fill="url(#fe)"/><path d="M5 25V20Q5 17.500 7.500 17.500H18.500Q21 17.500 21 20V25Z" fill="#1272c4"/></svg><i></i></button>
      <button aria-label="Store"><svg viewBox="0 0 26 26"><path d="M8 7V3Q8 2 9 2H17Q18 2 18 3V7" fill="none" stroke="#31b6ee" stroke-width="2"/><path d="M1 6H25V22Q25 25.500 21.500 25.500H4.500Q1 25.500 1 22Z" fill="#1a4a80"/><path d="M8 10.500H12.500V15H8Z" fill="#f25022"/><path d="M13.500 10.500H18V15H13.500Z" fill="#7fba00"/><path d="M8 16H12.500V20.500H8Z" fill="#00a4ef"/><path d="M13.500 16H18V20.500H13.500Z" fill="#ffb900"/></svg></button>
      <button aria-label="Chrome tabs"><svg viewBox="0 0 26 26"><path d="M8 3H24V16H8Z" fill="#e8e8e8" stroke="#8a8a8a" stroke-width="1.500"/><path d="M5 6H21V20H5Z" fill="#eee" stroke="#8a8a8a" stroke-width="1.500"/><path d="M2 9H19V23H2Z" fill="#f5f5f5" stroke="#999"/><path d="M4.500 23A6.500 6.500 0 0 1 17.500 23Z" fill="#e33b2e"/><path d="M4.500 23Q4 19 7 17L11 23Z" fill="#2da94f"/><path d="M17.500 23 15 19H11V23Z" fill="#fbc116"/><circle cx="11" cy="22" r="2.500" fill="#4285f4" stroke="#fff"/></svg></button>
      <button aria-label="Snapchat"><svg viewBox="0 0 26 26"><circle cx="13" cy="13.500" r="12" fill="#fff700"/><path d="M13 5Q17.500 5 17.500 10V12L19 12.500 18 14.500Q19 17 21 18L18 19.500 17 21Q15 20.500 13 22 11 20.500 9 21L8 19.500 5 18Q7.500 17 8 14.500L7 12.500 8.500 12V10Q8.500 5 13 5Z" fill="#fff" stroke="#222" stroke-width="1.200"/></svg><svg class="absolute left-[24px] top-px w-[16px]! h-[18px]!" viewBox="0 0 16 16"><circle cx="8" cy="8" r="7.500" fill="#e8effc"/><g fill="none" stroke="#1b55c4" stroke-width="1.500"><circle cx="8" cy="8" r="6.500"/><circle cx="8" cy="6.500" r="2.200"/><path d="M3.500 12Q8 8 12.500 12"/></g></svg><i></i></button>
      <button aria-label="Chrome"><svg viewBox="0 0 26 26"><g transform="translate(1 0)"><circle cx="12" cy="13.500" r="12" fill="#fbc116"/><path d="M1.600 7.500A12 12 0 0 1 22.400 7.500H12L6.800 16.500Z" fill="#e33b2e"/><path d="M1.600 7.500A12 12 0 0 0 12 25.500L17.200 16.500H6.800Z" fill="#2da94f"/><circle cx="12" cy="13.500" r="5.600" fill="#fff"/><circle cx="12" cy="13.500" r="4.400" fill="#1a73e8"/></g></svg><svg class="absolute left-[24px] top-px w-[16px]! h-[18px]!" viewBox="0 0 16 16"><circle cx="8" cy="8" r="7.500" fill="#e8effc"/><g fill="none" stroke="#1b55c4" stroke-width="1.500"><circle cx="8" cy="8" r="6.500"/><circle cx="8" cy="6.500" r="2.200"/><path d="M3.500 12Q8 8 12.500 12"/></g></svg><i></i></button>
      <button aria-label="Photos"><svg viewBox="0 0 26 26"><rect x="2" y="1.500" width="22" height="23" rx="2.500" fill="#1c62b8"/><path d="M2 24 13 11.500Q14.500 10 16 11.500L24 21V22Q24 24.500 21.500 24.500H4Z" fill="#2fa9e8"/><path d="m13 24.500-3-4 5-9 9 10Q24 24.500 21.500 24.500Z" fill="#53cdf5"/><circle cx="18" cy="6.500" r="2" fill="#fff"/></svg><i></i></button>
      <button aria-label="Photoshop"><span class="w-[22px] h-[23px] rounded-[4px] bg-[#001e36] text-[#31a8ff] text-[12px] font-bold leading-[22px]">Ps</span><i></i></button>
      <button aria-label="Illustrator" class="rounded-[4px] bg-white/45 border border-white/50"><span class="w-[22px] h-[23px] rounded-[4px] bg-[#330000] text-[#ff9a00] text-[12px] font-bold leading-[22px]">Ai</span><i class="w-3! bg-[#0a6cd0]!"></i></button>
      <button aria-label="Acrobat"><svg viewBox="0 0 26 26"><rect x="2" y="1.500" width="22" height="23" rx="4" fill="#b30b00"/><path d="M7 18.500Q12 15 13 9.500 13 6.500 12 7 11 8 13 12.500 15.500 16.500 19 17 20.500 16 18 15.200 13 14.500 7.500 17.500 6 19 7 18.500Z" fill="none" stroke="#fff" stroke-width="1.500"/></svg><i></i></button>
      <button aria-label="Snipping Tool"><svg viewBox="0 0 26 26"><rect x="1" y="4" width="19" height="21" rx="2" fill="#f4f6f9"/><path d="M4 17V7H14" fill="none" stroke="#d8401f" stroke-width="3.500" stroke-dasharray="2.500 1"/><path d="M4 19H17V8M14 20H22" fill="none" stroke="#7d838b" stroke-width="2"/><circle cx="22.500" cy="19" r="2.300" fill="none" stroke="#2f9fe0" stroke-width="1.500"/><path d="M15 20V24" stroke="#7d838b" stroke-width="3"/><circle cx="15" cy="24" r="1.800" fill="none" stroke="#2f9fe0" stroke-width="1.500"/></svg><i class="w-[14px]!"></i></button>
    </div>

    <div class="flex-1 flex items-center justify-end pr-[17px]">
      <svg class="w-[11px] h-[7px]" viewBox="0 0 11 7" fill="none" stroke="#1b1b1b" stroke-width="1.400"><path d="M.7 6.200 5.500 1.200 10.300 6.200"/></svg>
      <svg class="w-4 h-[14px] ml-[19px]" viewBox="0 0 16 14" fill="none" stroke="#1b1b1b" stroke-width="1.200"><path d="M1 5.500Q8-1.500 15 5.500M3 8Q8 3 13 8M5 10.300Q8 7.500 11 10.300"/><circle cx="8" cy="12" r="1.400" fill="#1b1b1b" stroke="none"/></svg>
      <svg class="w-[17px] h-[14px] ml-2" viewBox="0 0 17 14" fill="none" stroke="#1b1b1b"><path d="M.8 5H3.500L7 1.800V12.200L3.500 9H.8ZM9.500 5Q11 7 9.500 9M11.500 3Q14.500 7 11.500 11M13.500 1.500Q18 7 13.500 12.500"/></svg>
      <div class="ml-[15px] text-right leading-4"><p>03:19</p><p>03/01/2026</p></div>
    </div>
  </footer>
</body>
</html>
